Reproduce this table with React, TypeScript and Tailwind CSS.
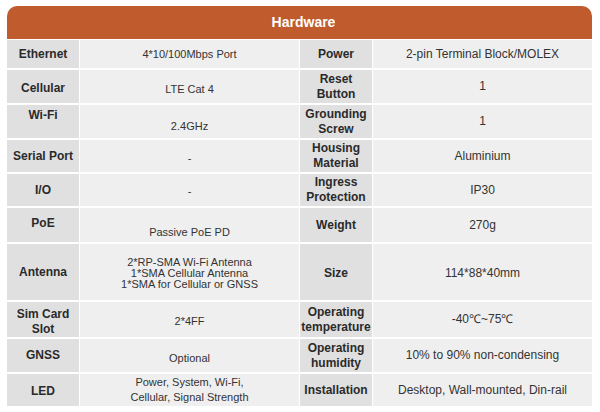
type Row = {
  h: string;
  l1: React.ReactNode;
  v1: React.ReactNode;
  l2: React.ReactNode;
  v2: React.ReactNode;
  l1cls?: string;
  v1cls?: string;
  rowcls?: string;
};

const rows: Row[] = [
  { h: 'h-[28px]', l1: 'Ethernet', v1: '4*10/100Mbps Port', l2: 'Power', v2: '2-pin Terminal Block/MOLEX' },
  { h: 'h-[33px]', l1: 'Cellular', v1: 'LTE Cat 4', l2: <>Reset<br />Button</>, v2: '1', l1cls: 'pt-[4px]', v1cls: 'pt-[6px]' },
  { h: 'h-[33px]', l1: 'Wi-Fi', v1: '2.4GHz', l2: <>Grounding<br />Screw</>, v2: '1', l1cls: 'pb-[12px]', v1cls: 'pt-[10px]' },
  { h: 'h-[32px]', l1: 'Serial Port', v1: '-', l2: <>Housing<br />Material</>, v2: 'Aluminium', v1cls: 'pt-[4px]' },
  { h: 'h-[32px]', l1: 'I/O', v1: '-', l2: <>Ingress<br />Protection</>, v2: 'IP30', v1cls: 'pt-[3px]' },
  { h: 'h-[34px]', l1: 'PoE', v1: 'Passive PoE PD', l2: 'Weight', v2: '270g', l1cls: 'pb-[3px]', v1cls: 'pt-[14px]' },
  {
    h: 'h-[56px]',
    l1: 'Antenna',
    v1: (
      <span className="leading-[11px] pt-[3px]">
        2*RP-SMA Wi-Fi Antenna<br />1*SMA Cellular Antenna<br />1*SMA for Cellular or GNSS
      </span>
    ),
    l2: 'Size',
    v2: '114*88*40mm',
    rowcls: 'pt-[2px]',
  },
  { h: 'h-[35px]', l1: <>Sim Card<br />Slot</>, v1: '2*4FF', l2: <>Operating<br />temperature</>, v2: '-40℃~75℃', l1cls: 'pt-[4px]', v1cls: 'pt-[4px]' },
  { h: 'h-[33px]', l1: 'GNSS', v1: 'Optional', l2: <>Operating<br />humidity</>, v2: '10% to 90% non-condensing', v1cls: 'pt-[6px]' },
  {
    h: 'h-[32px]',
    l1: 'LED',
    v1: (
      <span className="leading-[15px]">
        Power, System, Wi-Fi,<br />Cellular, Signal Strength
      </span>
    ),
    l2: 'Installation',
    v2: 'Desktop, Wall-mounted, Din-rail',
    l1cls: 'pt-[2px]',
  },
];

function Label({ children, extra = '' }: { children: React.ReactNode; extra?: string }) {
  return (
    <div className={`bg-[#e0e0e0] flex items-center justify-center text-center text-[12px] leading-[15px] font-bold text-[#2a2a2a] whitespace-nowrap ${extra}`}>
      <span>{children}</span>
    </div>
  );
}

function Value({ children, extra = '', size = 'text-[11px]' }: { children: React.ReactNode; extra?: string; size?: string }) {
  return (
    <div className={`bg-[#efefef] flex items-center justify-center text-center leading-[13px] text-[#333] ${size} ${extra}`}>
      {children}
    </div>
  );
}

export default function App() {
  return (
    <div className="w-[600px] h-[412px] bg-white pt-[6px] pl-[7px]" style={{ fontFamily: '"Liberation Sans", Arial, sans-serif' }}>
      <div className="w-[585px] flex flex-col gap-[1px]">
        <div className="h-[33px] rounded-t-[10px] bg-[#c05b2d] flex items-center justify-center pl-[8px] text-white font-bold text-[14px]">
          Hardware
        </div>
        <div className="flex flex-col gap-[2px]">
          {rows.map((r, i) => (
            <div key={i} className={`grid grid-cols-[72px_219px_72px_219px] gap-x-[1px] ${r.h}`}>
              <Label extra={r.l1cls}>{r.l1}</Label>
              <Value extra={r.v1cls}>{r.v1}</Value>
              <Label extra={r.rowcls}>{r.l2}</Label>
              <Value size="text-[12px]" extra={r.rowcls}>{r.v2}</Value>
            </div>
          ))}
        </div>
      </div>
    </div>
  );
}
